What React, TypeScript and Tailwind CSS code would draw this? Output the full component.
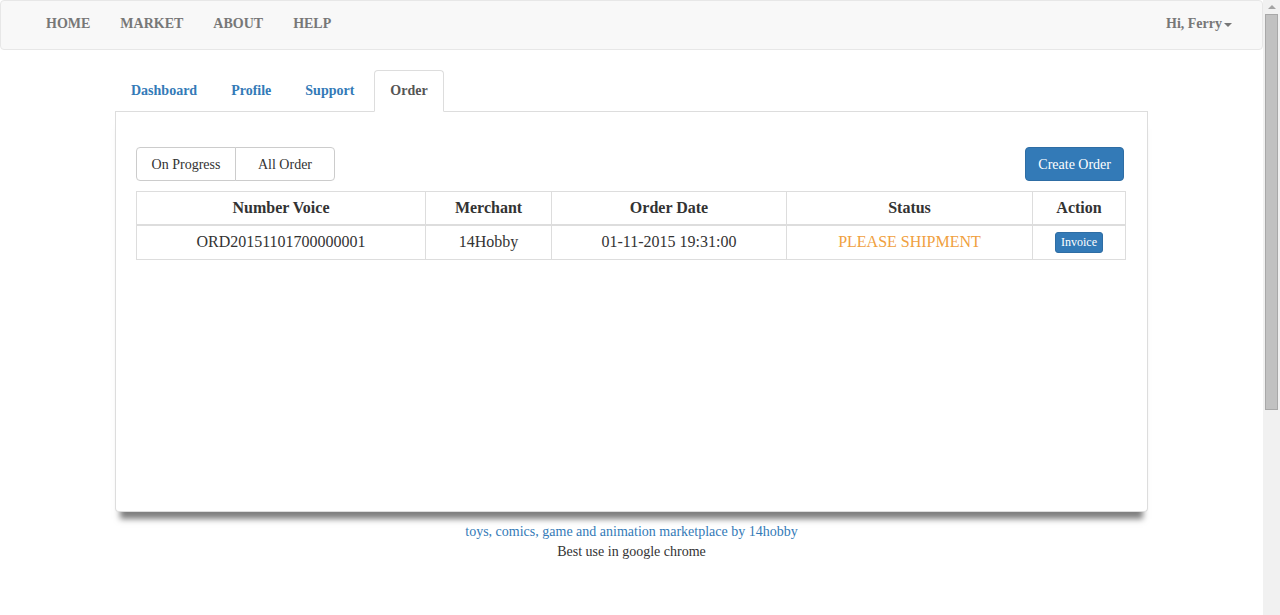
import React from 'react';

const navLinks = ['HOME', 'MARKET', 'ABOUT', 'HELP'];
const tabs = ['Dashboard', 'Profile', 'Support', 'Order'];

const orders = [
  {
    id: 'ORD20151101700000001',
    merchant: '14Hobby',
    date: '01-11-2015 19:31:00',
    status: 'PLEASE SHIPMENT',
  },
];

function Navbar() {
  return (
    <nav className="flex h-[50px] items-center rounded border border-[#e7e7e7] bg-[#f8f8f8] pb-[2px] pl-[30px] pr-[15px]">
      <ul className="flex">
        {navLinks.map((l) => (
          <li key={l}>
            <a href="#" className="block px-[15px] text-[14px] font-bold leading-[20px] text-[#777]">
              {l}
            </a>
          </li>
        ))}
      </ul>
      <a href="#" className="ml-auto flex items-center px-[15px] text-[14px] font-bold leading-[20px] text-[#777]">
        Hi, Ferry
        <span className="ml-[2px] mt-[2px] h-0 w-0 border-x-4 border-t-4 border-x-transparent border-t-[#777]" />
      </a>
    </nav>
  );
}

function OrderPanel() {
  return (
    <div className="ml-[115px] w-[1033px]">
      <ul className="flex border-b border-[#ddd] pl-0">
        {tabs.map((t) => {
          const active = t === 'Order';
          return (
            <li key={t} className="-mb-px mr-[2px]">
              <a
                href="#"
                className={
                  active
                    ? 'ml-[2px] block rounded-t border border-[#ddd] border-b-white bg-white px-[15px] py-[10px] text-[14px] font-bold leading-[20px] text-[#555]'
                    : 'block rounded-t border border-transparent px-[15px] py-[10px] text-[14px] font-bold leading-[20px] text-[#337ab7]'
                }
              >
                {t}
              </a>
            </li>
          );
        })}
      </ul>
      <div className="h-[400px] rounded-b border-x border-b border-[#ddd] bg-white px-[20px] pt-[35px] shadow-[0_12px_6px_-5px_rgba(0,0,0,0.5)]">
        <div className="flex items-center">
          <div className="flex">
            <button className="h-[34px] w-[100px] rounded-l border border-[#ccc] bg-white text-[14px] text-[#333]">
              On Progress
            </button>
            <button className="-ml-px h-[34px] w-[100px] rounded-r border border-[#ccc] bg-white text-[14px] text-[#333]">
              All Order
            </button>
          </div>
          <button className="ml-auto mr-[3px] h-[34px] rounded border border-[#2e6da4] bg-[#337ab7] px-[12px] text-[14px] text-white">
            Create Order
          </button>
        </div>
        <table className="mt-[10px] w-[989px] table-fixed border-collapse border border-[#ddd] text-[16px] text-[#333]">
          <thead>
            <tr>
              <th className="w-[289px] border border-b-2 border-[#ddd] py-[5px] leading-[22px]">Number Voice</th>
              <th className="w-[126px] border border-b-2 border-[#ddd] py-[5px] leading-[22px]">Merchant</th>
              <th className="w-[235px] border border-b-2 border-[#ddd] py-[5px] leading-[22px]">Order Date</th>
              <th className="w-[246px] border border-b-2 border-[#ddd] py-[5px] leading-[22px]">Status</th>
              <th className="w-[93px] border border-b-2 border-[#ddd] py-[5px] leading-[22px]">Action</th>
            </tr>
          </thead>
          <tbody>
            {orders.map((o) => (
              <tr key={o.id} className="text-center">
                <td className="border border-[#ddd] pb-[6px] pt-[4px] leading-[22px]">{o.id}</td>
                <td className="border border-[#ddd] pb-[6px] pt-[4px] leading-[22px]">{o.merchant}</td>
                <td className="border border-[#ddd] pb-[6px] pt-[4px] leading-[22px]">{o.date}</td>
                <td className="border border-[#ddd] pb-[6px] pt-[4px] leading-[22px] text-[#f0a040]">{o.status}</td>
                <td className="border border-[#ddd] pb-[6px] pt-[4px] leading-[22px]">
                  <button className="rounded-[3px] border border-[#2e6da4] bg-[#337ab7] px-[5px] text-[12px] leading-[19px] text-white">
                    Invoice
                  </button>
                </td>
              </tr>
            ))}
          </tbody>
        </table>
      </div>
      <div className="mt-[10px] text-center text-[14px] leading-[20px]">
        <a href="#" className="text-[#337ab7]">
          toys, comics, game and animation marketplace by 14hobby
        </a>
        <p className="text-[#333]">Best use in google chrome</p>
      </div>
    </div>
  );
}

function Scrollbar() {
  return (
    <div className="flex h-full w-[17px] flex-col items-center bg-[#f1f1f1]">
      <div className="mt-[5px] h-0 w-0 border-x-[4px] border-b-[4px] border-x-transparent border-b-[#a3a3a3]" />
      <div className="mt-[5px] h-[396px] w-[13px] border border-[#a8a8a8] bg-[#c1c1c1]" />
    </div>
  );
}

export default function App() {
  return (
    <div className="flex h-[615px] w-full overflow-hidden bg-white font-['Liberation_Serif',serif]">
      <div className="flex-1">
        <Navbar />
        <div className="mt-[20px]">
          <OrderPanel />
        </div>
      </div>
      <Scrollbar />
    </div>
  );
}
